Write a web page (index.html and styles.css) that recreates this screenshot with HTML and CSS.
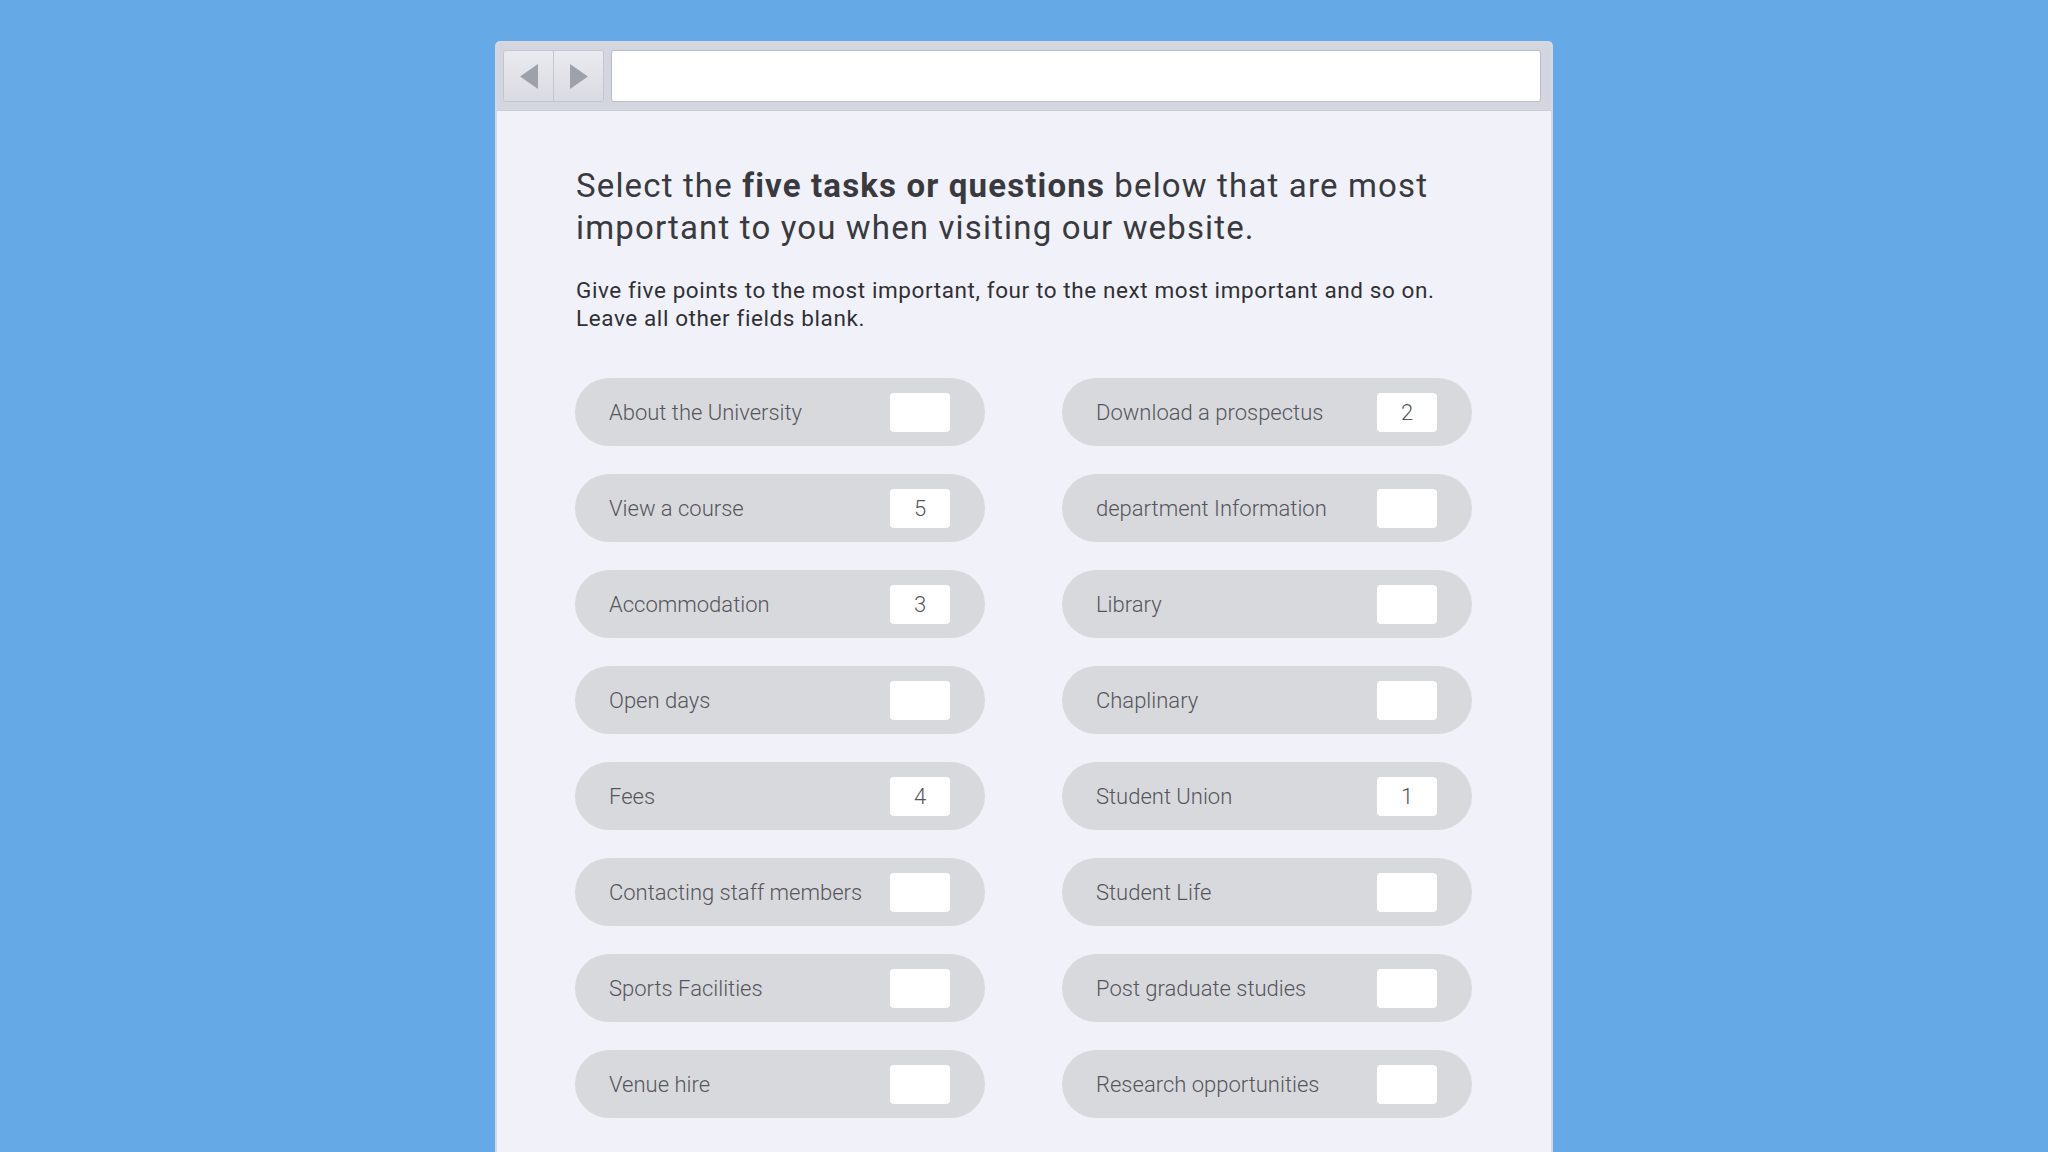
FILE: index.html
```html
<!DOCTYPE html>
<html lang="en">
<head>
<meta charset="utf-8">
<title>Top tasks survey</title>
<link rel="stylesheet" href="styles.css">
</head>
<body>
<div class="window">
  <div class="toolbar">
    <div class="nav">
      <div class="nav-btn">
        <svg width="18" height="25" viewBox="0 0 18 25"><polygon points="18,0 18,25 0,12.5" fill="#9da1aa"/></svg>
      </div>
      <div class="nav-btn">
        <svg width="18" height="25" viewBox="0 0 18 25"><polygon points="0,0 0,25 18,12.5" fill="#9da1aa"/></svg>
      </div>
    </div>
    <div class="url"></div>
  </div>
  <div class="content">
    <h1 class="title">Select the <b>five tasks or questions</b> below that are most important to you when visiting our website.</h1>
    <p class="intro">Give five points to the most important, four to the next most important and so on.<br>Leave all other fields blank.</p>
    <div class="grid">
      <div class="pill"><span class="label">About the University</span><span class="box"></span></div>
      <div class="pill"><span class="label">Download a prospectus</span><span class="box">2</span></div>
      <div class="pill"><span class="label">View a course</span><span class="box">5</span></div>
      <div class="pill"><span class="label">department Information</span><span class="box"></span></div>
      <div class="pill"><span class="label">Accommodation</span><span class="box">3</span></div>
      <div class="pill"><span class="label">Library</span><span class="box"></span></div>
      <div class="pill"><span class="label">Open days</span><span class="box"></span></div>
      <div class="pill"><span class="label">Chaplinary</span><span class="box"></span></div>
      <div class="pill"><span class="label">Fees</span><span class="box">4</span></div>
      <div class="pill"><span class="label">Student Union</span><span class="box">1</span></div>
      <div class="pill"><span class="label">Contacting staff members</span><span class="box"></span></div>
      <div class="pill"><span class="label">Student Life</span><span class="box"></span></div>
      <div class="pill"><span class="label">Sports Facilities</span><span class="box"></span></div>
      <div class="pill"><span class="label">Post graduate studies</span><span class="box"></span></div>
      <div class="pill"><span class="label">Venue hire</span><span class="box"></span></div>
      <div class="pill"><span class="label">Research opportunities</span><span class="box"></span></div>
    </div>
  </div>
</div>
</body>
</html>
```
FILE: styles.css
```css
html, body {
  margin: 0;
  padding: 0;
}
body {
  background: #65a9e6;
  font-family: Roboto, "Liberation Sans", sans-serif;
  padding-top: 41px;
  height: 1111px;
  overflow: hidden;
}
.window {
  width: 1054px;
  margin: 0 auto;
  border: 2px solid #d6d8e0;
  border-bottom: none;
  border-radius: 5px 5px 0 0;
  background: #f1f2f9;
  height: 1200px;
}
.toolbar {
  height: 68px;
  background: #d3d6de;
  border-bottom: 1px solid #c9ccd5;
  box-sizing: border-box;
  display: flex;
  align-items: flex-start;
  padding: 7px 10px 0 6px;
  gap: 7px;
  border-radius: 3px 3px 0 0;
}
.nav {
  display: flex;
  height: 52px;
  border: 1px solid #c3c6cf;
  border-radius: 3px;
  box-sizing: border-box;
  overflow: hidden;
}
.nav-btn {
  width: 49px;
  display: flex;
  align-items: center;
  justify-content: center;
  background: linear-gradient(#eaebf0, #d9dbe2);
}
.nav-btn + .nav-btn {
  border-left: 1px solid #c3c6cf;
}
.url {
  flex: 1;
  height: 52px;
  box-sizing: border-box;
  background: #ffffff;
  border: 1px solid #b9bcc6;
  border-radius: 3px;
}
.content {
  padding: 54px 0 0 79px;
}
.title {
  margin: 0;
  width: 900px;
  font-size: 33px;
  line-height: 42px;
  font-weight: 400;
  letter-spacing: 1.15px;
  color: #393a40;
}
.title b {
  font-weight: 700;
}
.intro {
  margin: 27px 0 0;
  font-size: 22.5px;
  line-height: 28px;
  letter-spacing: 0.6px;
  color: #2f3035;
}
.grid {
  margin-top: 46px;
  margin-left: -1px;
  display: grid;
  grid-template-columns: 410px 410px;
  column-gap: 77px;
  row-gap: 28px;
}
.pill {
  height: 68px;
  border-radius: 34px;
  background: #d8d9dc;
  display: flex;
  align-items: center;
  justify-content: space-between;
  padding: 0 35px 0 34px;
}
.label {
  font-size: 22px;
  color: #55565c;
  font-weight: 300;
}
.box {
  width: 60px;
  height: 39px;
  background: #ffffff;
  border-radius: 4px;
  display: flex;
  align-items: center;
  justify-content: center;
  font-size: 22px;
  font-weight: 300;
  color: #55565c;
}
```
